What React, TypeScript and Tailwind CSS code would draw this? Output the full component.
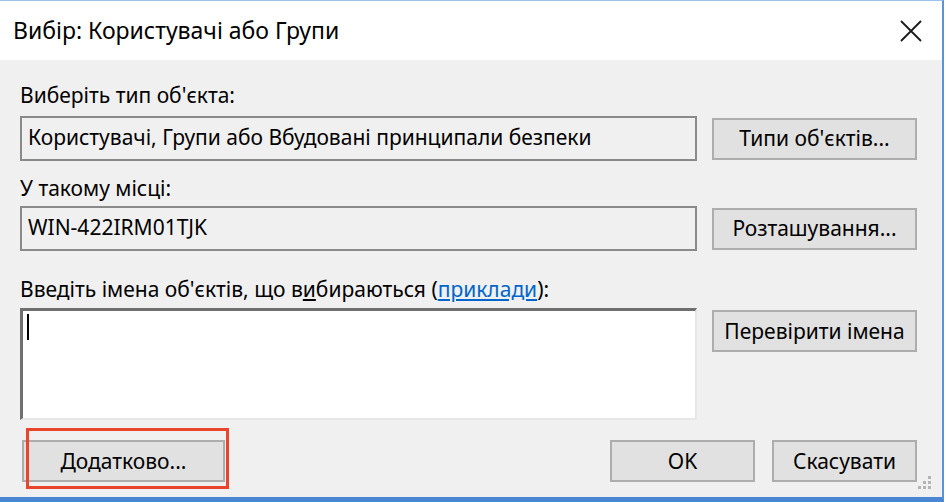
import React from 'react';

const font = { fontFamily: '"Noto Sans", "Open Sans", sans-serif' };

const Btn = ({ label, className = '' }: { label: string; className?: string }) => (
  <div
    className={`h-[42px] flex items-center justify-center bg-[#e1e1e1] border-2 border-[#adadad] text-[21px] leading-none text-black ${className}`}
  >
    {label}
  </div>
);

const SizeGrip = () => (
  <svg className="absolute right-[10px] bottom-[7px]" width="14" height="14" viewBox="0 0 14 14">
    <rect x="10" y="0" width="3" height="3" fill="#b4b4b4" />
    <rect x="5" y="5" width="3" height="3" fill="#b4b4b4" />
    <rect x="10" y="5" width="3" height="3" fill="#b4b4b4" />
    <rect x="0" y="10" width="3" height="3" fill="#b4b4b4" />
    <rect x="5" y="10" width="3" height="3" fill="#b4b4b4" />
    <rect x="10" y="10" width="3" height="3" fill="#b4b4b4" />
  </svg>
);

export default function App() {
  return (
    <div className="w-[946px] h-[502px] flex bg-white overflow-hidden" style={font}>
      <div className="w-[944px] h-full flex flex-col border-t border-t-[#9cc3ec] border-r-2 border-r-[#5b93d8] border-b-[5px] border-b-[#4a86d4]">
        {/* title bar */}
        <div className="h-[59px] bg-white flex items-center justify-between pl-[13px] pr-[20px]">
          <span className="text-[23px] text-black">Вибір: Користувачі або Групи</span>
          <svg width="22" height="22" viewBox="0 0 22 22">
            <path d="M1 1 L21 21 M21 1 L1 21" stroke="#1a1a1a" strokeWidth="1.8" fill="none" />
          </svg>
        </div>

        {/* body */}
        <div className="relative flex-1 bg-[#f0f0f0] flex flex-col pl-[20px] pt-[24px] text-[21px] text-black">
          <div className="h-[22px] leading-[22px]">Виберіть тип об'єкта:</div>
          <div className="mt-[10px] flex items-center gap-[15px]">
            <div className="w-[677px] h-[45px] border-2 border-[#8a8a8a] flex items-center pl-[6px] pb-[2px]">
              Користувачі, Групи або Вбудовані принципали безпеки
            </div>
            <Btn label="Типи об'єктів..." className="w-[205px]" />
          </div>

          <div className="mt-[16px] h-[22px] leading-[22px]">У такому місці:</div>
          <div className="mt-[7px] flex items-center gap-[15px]">
            <div className="w-[677px] h-[45px] border-2 border-[#8a8a8a] flex items-center pl-[6px] pb-[2px]">
              WIN-422IRM01TJK
            </div>
            <Btn label="Розташування..." className="w-[205px]" />
          </div>

          <div className="mt-[27px] h-[22px] leading-[22px]">
            Введіть імена об'єктів, що в<span className="underline">и</span>бираються (
            <span className="text-[#0066cc] underline">приклади</span>):
          </div>
          <div className="mt-[8px] flex items-start gap-[15px]">
            <div className="w-[677px] h-[112px] bg-white border-t-[3px] border-l-[3px] border-t-[#6f6f6f] border-l-[#6f6f6f] border-b-2 border-r-2 border-b-[#e6e6e6] border-r-[#e6e6e6] pl-[4px] pt-[3px]">
              <div className="w-[2px] h-[26px] bg-black" />
            </div>
            <Btn label="Перевірити імена" className="w-[205px] mt-[2px]" />
          </div>

          <div className="mt-[20px] flex items-center pl-[2px]">
            <div className="relative">
              <Btn label="Додатково..." className="w-[203px]" />
              <div className="absolute -top-[12px] left-[4px] w-[203px] h-[61px] border-[3px] border-[#e8452c]" />
            </div>
            <Btn label="OK" className="w-[145px] ml-[385px]" />
            <Btn label="Скасувати" className="w-[145px] ml-[17px]" />
          </div>

          <SizeGrip />
        </div>
      </div>
      <div className="flex-1 bg-white" />
    </div>
  );
}
